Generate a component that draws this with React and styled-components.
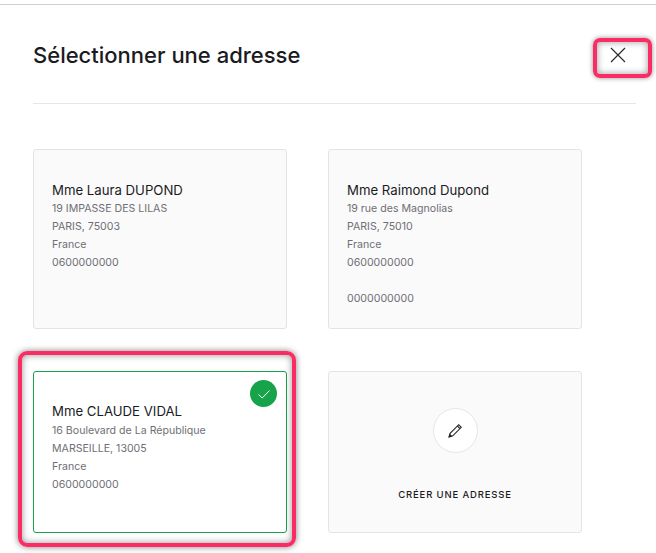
import React from 'react';
import styled, { createGlobalStyle } from 'styled-components';

const ADDRESSES = [
  {
    name: 'Mme Laura DUPOND',
    lines: ['19 IMPASSE DES LILAS', 'PARIS, 75003', 'France', '0600000000'],
  },
  {
    name: 'Mme Raimond Dupond',
    lines: ['19 rue des Magnolias', 'PARIS, 75010', 'France', '0600000000', '\u00a0', '0000000000'],
  },
  {
    name: 'Mme CLAUDE VIDAL',
    lines: ['16 Boulevard de La République', 'MARSEILLE, 13005', 'France', '0600000000'],
    selected: true,
  },
];

const AddressCard = ({ name, lines, selected }) => {
  return (
    <Card $selected={selected}>
      {selected && (
        <>
          <Highlight />
          <CheckBadge>
            <svg width="14" height="14" viewBox="0 0 14 14" fill="none" stroke="#fff" strokeWidth="1">
              <path d="M1.5 7.5 L5.2 11 L12.5 3.5" />
            </svg>
          </CheckBadge>
        </>
      )}
      <Name $selected={selected}>{name}</Name>
      {lines.map((line, i) => (
        <Line key={i}>{line}</Line>
      ))}
    </Card>
  );
};

const App = () => {
  return (
    <Page>
      <GlobalStyle />
      <Header>
        <Title>Sélectionner une adresse</Title>
        <CloseButton aria-label="Fermer">
          <svg width="16" height="16" viewBox="0 0 16 16" fill="none" stroke="#2b2b2b" strokeWidth="1.2">
            <path d="M1 1 L15 15 M15 1 L1 15" />
          </svg>
        </CloseButton>
      </Header>
      <Grid>
        {ADDRESSES.map((address) => (
          <AddressCard key={address.name} {...address} />
        ))}
        <CreateCard>
          <PencilCircle>
            <svg width="15" height="15" viewBox="0 0 14 14" fill="none" stroke="#222" strokeWidth="1">
              <path d="M1.2 12.8 L2 9.6 L10 1.6 L12.4 4 L4.4 12 Z" />
              <path d="M8.8 2.8 L11.2 5.2" />
              <path d="M1 13 L1.6 10.8 L3.2 12.4 Z" fill="#222" />
            </svg>
          </PencilCircle>
          <CreateLabel>CRÉER UNE ADRESSE</CreateLabel>
        </CreateCard>
      </Grid>
    </Page>
  );
};

const GlobalStyle = createGlobalStyle`
  html, body {
    margin: 0;
    padding: 0;
    background: #fff;
  }
  *, *::before, *::after {
    box-sizing: border-box;
  }
`;

const Page = styled.div`
  width: 656px;
  height: 549px;
  overflow: hidden;
  margin-top: 4px;
  border-top: 1px solid #cfcfcf;
  padding-left: 33px;
  font-family: Inter, "Noto Sans", sans-serif;
`;

const Header = styled.header`
  width: 603px;
  height: 99px;
  display: flex;
  align-items: flex-start;
  justify-content: space-between;
  border-bottom: 1px solid #e6e6e6;
  padding-top: 36px;
`;

const Title = styled.h1`
  margin: 0;
  font-size: 22px;
  line-height: 28px;
  font-weight: 500;
  color: #1b1b1f;
  letter-spacing: 0;
`;

const CloseButton = styled.button`
  position: relative;
  width: 16px;
  height: 16px;
  padding: 0;
  margin: 6px 10px 0 0;
  border: 0;
  background: none;
  display: flex;

  &::after {
    content: '';
    position: absolute;
    left: -17px;
    top: -9px;
    width: 59px;
    height: 40px;
    border: 4px solid #fb2c63;
    border-radius: 7px;
    box-shadow: 0 0 5px rgba(0, 0, 0, 0.45), inset 0 0 7px rgba(0, 0, 0, 0.4);
  }
`;

const Grid = styled.div`
  display: grid;
  grid-template-columns: 254px 254px;
  grid-template-rows: 180px 162px;
  column-gap: 41px;
  row-gap: 42px;
  margin-top: 45px;
`;

const Card = styled.div`
  position: relative;
  padding: ${(p) => (p.$selected ? '30px' : '31px')} 18px 0;
  border: 1px solid ${(p) => (p.$selected ? '#16a34a' : '#e4e4e4')};
  border-radius: 3px;
  background: ${(p) => (p.$selected ? '#fff' : '#fafafa')};
`;

const Highlight = styled.div`
  position: absolute;
  left: -16px;
  right: -10px;
  top: -21px;
  bottom: -15px;
  border: 4px solid #fb2c63;
  border-radius: 9px;
  box-shadow: 0 0 6px rgba(0, 0, 0, 0.5), inset 0 0 7px rgba(0, 0, 0, 0.42);
  pointer-events: none;
`;

const CheckBadge = styled.div`
  position: absolute;
  top: 8px;
  right: 9px;
  width: 27px;
  height: 27px;
  border-radius: 50%;
  background: #16a34a;
  display: flex;
  align-items: center;
  justify-content: center;
`;

const Name = styled.div`
  font-size: 13.2px;
  line-height: 19px;
  margin-bottom: ${(p) => (p.$selected ? '1px' : '0')};
  font-weight: 400;
  color: #1b1b1f;
`;

const Line = styled.div`
  font-size: 10.6px;
  line-height: 18px;
  color: #6f6f76;
`;

const CreateCard = styled.div`
  padding-top: 36px;
  border: 1px solid #e4e4e4;
  border-radius: 3px;
  background: #fafafa;
  display: flex;
  flex-direction: column;
  align-items: center;
`;

const PencilCircle = styled.div`
  width: 45px;
  height: 45px;
  border: 1px solid #e6e6e6;
  border-radius: 50%;
  background: #fff;
  display: flex;
  align-items: center;
  justify-content: center;
`;

const CreateLabel = styled.div`
  margin-top: 35px;
  font-size: 9.5px;
  line-height: 14px;
  font-weight: 500;
  letter-spacing: 0.85px;
  color: #1b1b1f;
`;

export default App;
